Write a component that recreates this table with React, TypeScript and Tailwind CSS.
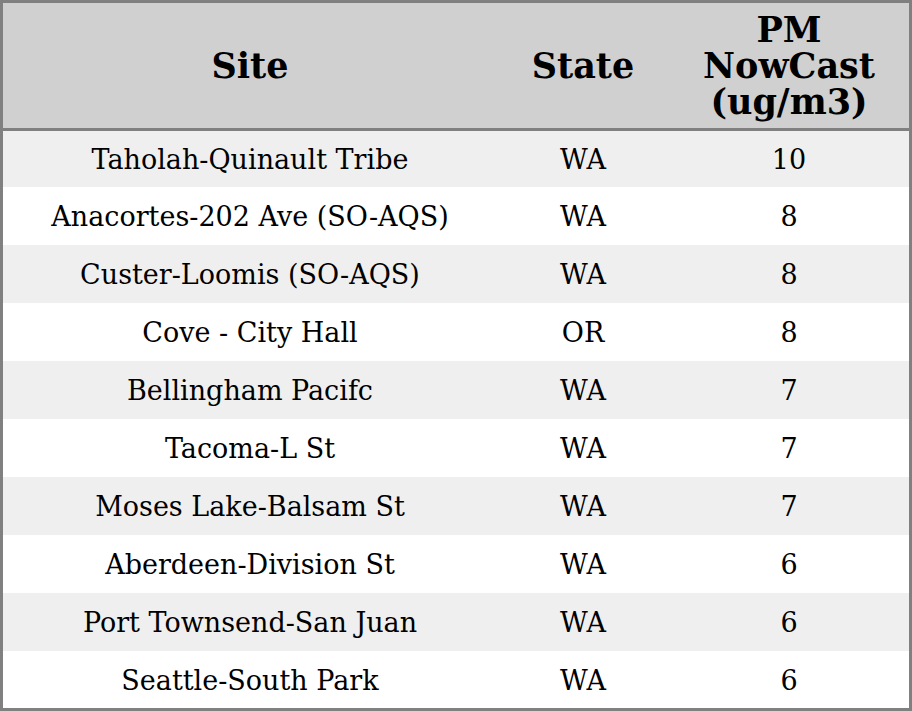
import React from "react";

const rows: [string, string, string][] = [
  ["Taholah-Quinault Tribe", "WA", "10"],
  ["Anacortes-202 Ave (SO-AQS)", "WA", "8"],
  ["Custer-Loomis (SO-AQS)", "WA", "8"],
  ["Cove - City Hall", "OR", "8"],
  ["Bellingham Pacifc", "WA", "7"],
  ["Tacoma-L St", "WA", "7"],
  ["Moses Lake-Balsam St", "WA", "7"],
  ["Aberdeen-Division St", "WA", "6"],
  ["Port Townsend-San Juan", "WA", "6"],
  ["Seattle-South Park", "WA", "6"],
];

const heights = ["h-[56px]", "h-[58px]", "h-[58px]", "h-[58px]", "h-[58px]", "h-[58px]", "h-[58px]", "h-[58px]", "h-[58px]", "h-[57px]"];

export default function App() {
  return (
    <div className="w-[912px] h-[711px] bg-white border-[3px] border-[#808080] text-black flex flex-col" style={{ fontFamily: '"DejaVu Serif", serif' }}>
      <div className="grid grid-cols-[494px_172px_240px] h-[125px] bg-[#d0d0d0] border-b-[3px] border-[#808080] box-content font-bold text-[35px] leading-[36px]">
        <div className="flex items-center justify-center text-center">Site</div>
        <div className="flex items-center justify-center text-center">State</div>
        <div className="flex items-center justify-center text-center">
          <span>PM<br />NowCast<br />(ug/m3)</span>
        </div>
      </div>
      {rows.map((r, i) => (
        <div key={i} className={`grid grid-cols-[494px_172px_240px] ${heights[i]} text-[27px] leading-[32px] pt-[2px] ${i % 2 === 0 ? "bg-[#efefef]" : "bg-white"}`}>
          <div className="flex items-center justify-center">{r[0]}</div>
          <div className="flex items-center justify-center">{r[1]}</div>
          <div className="flex items-center justify-center">{r[2]}</div>
        </div>
      ))}
    </div>
  );
}
